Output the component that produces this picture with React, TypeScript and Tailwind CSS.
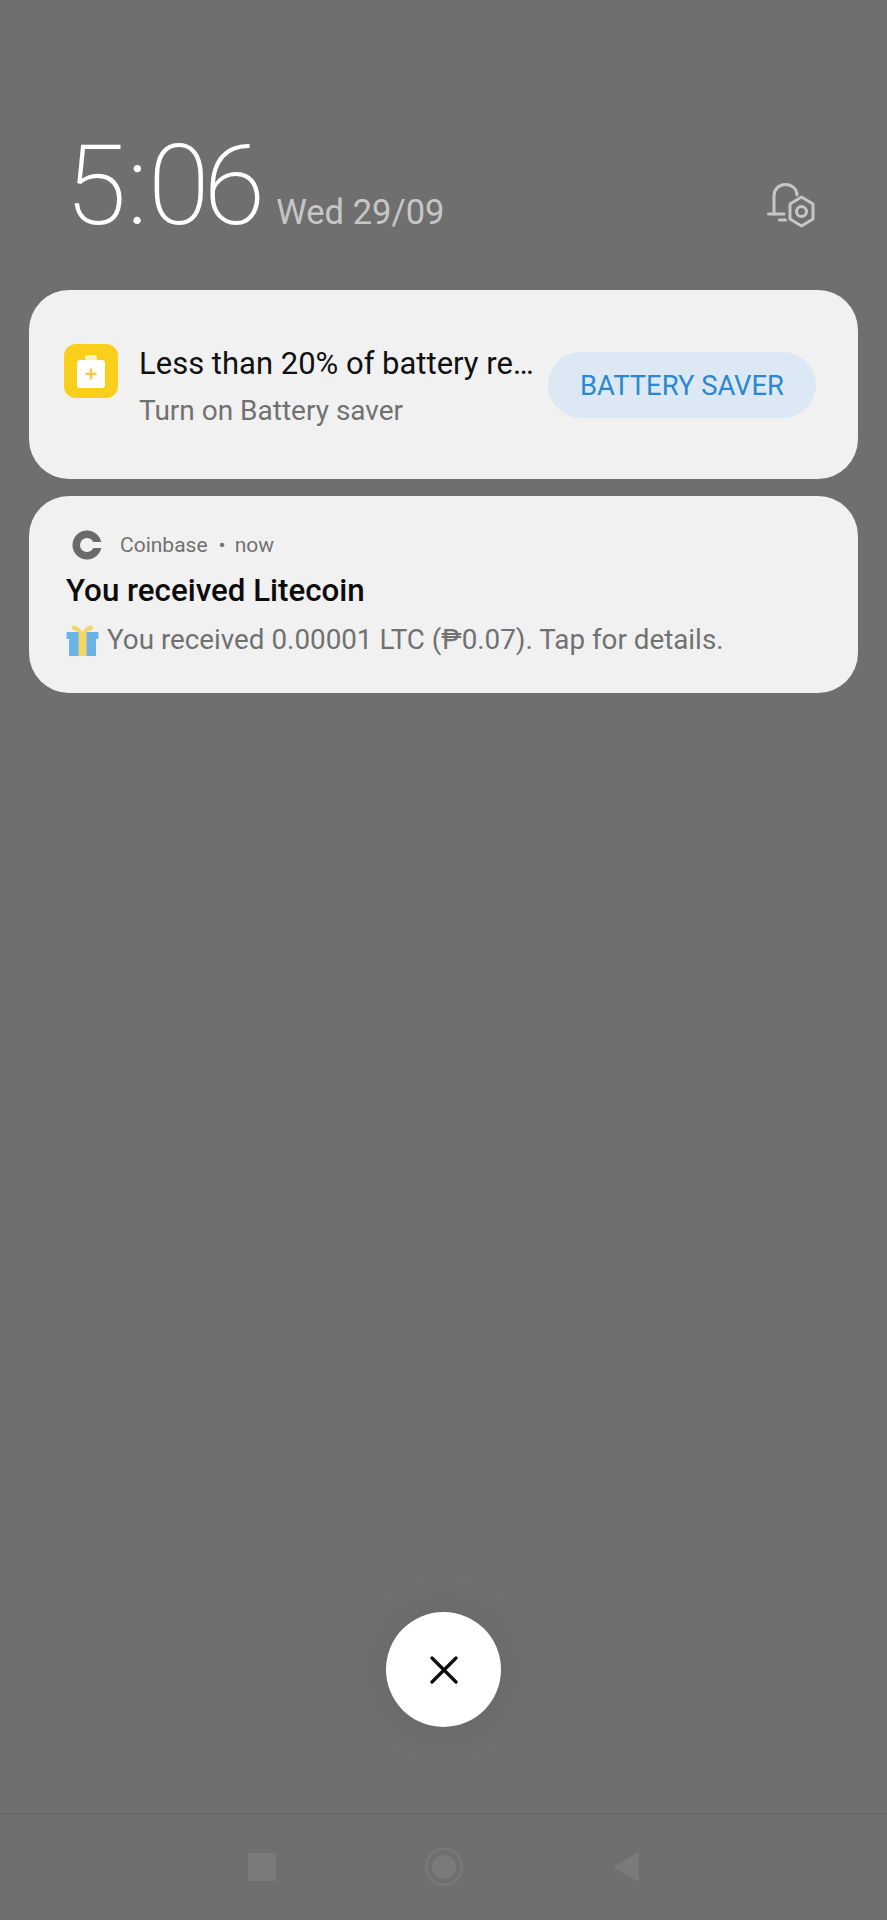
import React from "react";

const font = "[font-family:Roboto,'Liberation_Sans',sans-serif]";

function BellHex() {
  return (
    <svg width="48" height="46" viewBox="0 0 48 46" fill="none" stroke="#c6c6c6" strokeWidth="3" strokeLinecap="round" strokeLinejoin="round">
      <path d="M7 31 V13 C7 6 12 1.5 18.5 1.5 C25 1.5 30 6 30 12" />
      <path d="M1.5 31 H17" />
      <path d="M12.5 37 H18.5" />
      <path d="M34.5 14 L46 21 V36 L34.5 43 L23 36 V21 Z" />
      <circle cx="34.5" cy="28.5" r="5" />
    </svg>
  );
}

function BatteryIcon() {
  return (
    <div className="mb-[27px] flex h-[54px] w-[54px] shrink-0 items-center justify-center rounded-[12px] bg-[#f9cf1b]">
      <svg width="28" height="33" viewBox="0 0 28 33">
        <rect x="8" y="0" width="12" height="5" rx="1.5" fill="#fff" opacity="0.7" />
        <rect x="0" y="5" width="28" height="28" rx="3" fill="#fff" />
        <path d="M14 13.5 V24.5 M8.5 19 H19.5" stroke="#f7c84a" strokeWidth="2.4" />
      </svg>
    </div>
  );
}

function CoinbaseIcon() {
  return (
    <svg width="30" height="30" viewBox="0 0 30 30" className="shrink-0">
      <circle cx="15" cy="15" r="14.5" fill="#6a6a6a" />
      <circle cx="15" cy="15" r="7" fill="#f1f1f1" />
      <rect x="15" y="12" width="15" height="6" fill="#f1f1f1" />
    </svg>
  );
}

function GiftIcon() {
  return (
    <svg width="33" height="32" viewBox="0 0 33 32" className="shrink-0">
      <path d="M16.5 8 C12 1 7 0 6 3 C5 6 10 8 16.5 8 C23 8 28 6 27 3 C26 0 21 1 16.5 8 Z" fill="#f3d766" />
      <rect x="0.5" y="8" width="32" height="7" rx="1" fill="#6bb3e6" />
      <rect x="3" y="15" width="27" height="17" rx="1" fill="#6bb3e6" />
      <rect x="12.5" y="8" width="8" height="24" fill="#f3d766" />
    </svg>
  );
}

function App() {
  return (
    <div className={`flex min-h-[1920px] w-full flex-col bg-[#6f6f6f] ${font}`}>
      <header className="flex items-start justify-between pl-[65px] pr-[72px] pt-[125px]">
        <div className="flex items-baseline">
          <span className="text-[112px] leading-[122px] font-extralight tracking-[-6px] text-white">
            5<span className="mx-[6px]">:</span>06
          </span>
          <span className="ml-[17px] text-[34.5px] leading-none text-[#c6c6c6]">Wed 29/09</span>
        </div>
        <div className="pt-[58px]">
          <BellHex />
        </div>
      </header>

      <main className="mt-[43px] flex flex-col gap-[17px] px-[29px]">
        <section className="flex h-[189px] items-center rounded-[40px] bg-[#f1f1f1] pl-[35px] pr-[42px]">
          <BatteryIcon />
          <div className="ml-[21px] pt-[5px]">
            <p className="text-[31px] leading-[38px] whitespace-nowrap text-[#111]">Less than 20% of battery re…</p>
            <p className="mt-[10px] text-[28px] leading-[36px] text-[#717171]">Turn on Battery saver</p>
          </div>
          <button type="button" className="ml-auto flex h-[66px] w-[268px] items-center justify-center rounded-full bg-[#dce8f4] pt-[4px] text-[27.4px] text-[#2b88cf]">
            BATTERY SAVER
          </button>
        </section>

        <section className="h-[197px] rounded-[40px] bg-[#f1f1f1] pl-[37px] pt-[34px]">
          <div className="flex items-center pl-[6px]">
            <CoinbaseIcon />
            <span className="ml-[18px] text-[21px] leading-[30px] text-[#717171]">Coinbase</span>
            <span className="mx-[11px] text-[21px] leading-[30px] text-[#717171]">•</span>
            <span className="-ml-[2px] text-[21px] leading-[30px] text-[#717171]">now</span>
          </div>
          <h2 className="mt-[10px] text-[31.3px] leading-[42px] font-medium text-[#0c0c0c]">You received Litecoin</h2>
          <div className="mt-[10px] flex items-center">
            <GiftIcon />
            <p className="ml-[8px] text-[27.8px] leading-[36px] text-[#717171]">You received 0.00001 LTC (₱0.07). Tap for details.</p>
          </div>
        </section>
      </main>

      <div className="mt-auto flex justify-center pb-[86px]">
        <button type="button" className="flex h-[115px] w-[115px] items-center justify-center rounded-full bg-white shadow-[0_0_50px_rgba(0,0,0,0.07)]">
          <svg width="28" height="28" viewBox="0 0 28 28" stroke="#0c0c0c" strokeWidth="3.2" strokeLinecap="round">
            <path d="M2 2 L26 26 M26 2 L2 26" />
          </svg>
        </button>
      </div>

      <nav className="flex h-[107px] items-center justify-center border-t-2 border-[#696969] pb-[2px]">
        <div className="flex w-[392px] items-center justify-between">
          <div className="h-[28px] w-[28px] bg-[#7a7a7a]" />
          <svg width="40" height="40" viewBox="0 0 40 40">
            <circle cx="20" cy="20" r="18" fill="none" stroke="#787878" strokeWidth="2.5" />
            <circle cx="20" cy="20" r="12" fill="#7a7a7a" />
          </svg>
          <svg width="28" height="32" viewBox="0 0 28 32">
            <path d="M27 1 V31 L1 16 Z" fill="#7a7a7a" />
          </svg>
        </div>
      </nav>
    </div>
  );
}

export default App;
